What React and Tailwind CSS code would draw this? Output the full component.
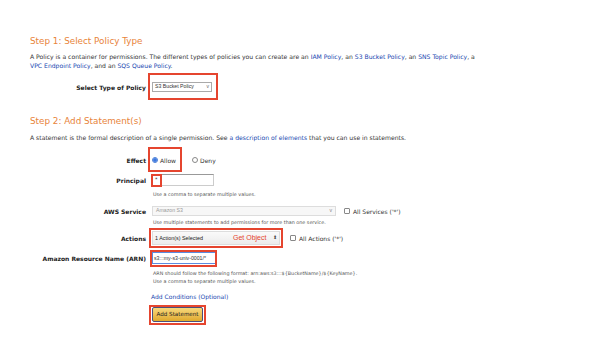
import React from 'react';

const font = { fontFamily: '"DejaVu Sans", Verdana, sans-serif' };

const Label = ({ children }) => (
    <div className="w-[116px] shrink-0 text-right font-bold text-[6px] text-[#222]">{children}</div>
);

const Check = ({ children }) => (
    <div className="flex items-center gap-[3px] text-[6px] text-[#333]">
        <span className="w-[6px] h-[6px] border border-[#888] bg-white rounded-[1px]" />
        {children}
    </div>
);

export default function App() {
    return (
        <div style={font} className="w-[614px] h-[340px] bg-white overflow-hidden pl-[30px] pt-[36px] text-[#333]">
            <h2 className="text-[8.8px] leading-[10px] text-[#e8843a]">Step 1: Select Policy Type</h2>
            <p className="mt-[6px] text-[6.1px] leading-[9px] text-[#333]">
                A Policy is a container for permissions. The different types of policies you can create are an{' '}
                <span className="text-[#2048b0]">IAM Policy</span>, an <span className="text-[#2048b0]">S3 Bucket Policy</span>, an{' '}
                <span className="text-[#2048b0]">SNS Topic Policy</span>, a<br />
                <span className="text-[#2048b0]">VPC Endpoint Policy</span>, and an <span className="text-[#2048b0]">SQS Queue Policy</span>.
            </p>

            {/* select type */}
            <div className="mt-[12px] flex items-center gap-[6px] h-[10px]">
                <Label>Select Type of Policy</Label>
                <div className="relative">
                    <div className="w-[60px] h-[10px] border border-[#aaa] bg-white flex items-center justify-between px-[2px] text-[5.2px] text-[#333]" style={{ fontFamily: '"Liberation Sans", Arial, sans-serif' }}>
                        <span>S3 Bucket Policy</span>
                        <span className="text-[5px] text-[#666]">v</span>
                    </div>
                    <div className="absolute left-[-4px] top-[-9px] w-[70px] h-[27px] border-2 border-[#e5452f]" />
                </div>
            </div>

            <h2 className="mt-[24px] text-[8.8px] leading-[10px] text-[#e8843a]">Step 2: Add Statement(s)</h2>
            <p className="mt-[6.5px] text-[6.1px] leading-[9px]">
                A statement is the formal description of a single permission. See{' '}
                <span className="text-[#2048b0]">a description of elements</span> that you can use in statements.
            </p>

            {/* effect */}
            <div className="mt-[13.5px] flex items-center gap-[6px] h-[10px]">
                <Label>Effect</Label>
                <div className="relative flex items-center text-[6px]">
                    <span className="w-[6px] h-[6px] rounded-full border border-[#4a7fd6] bg-white flex items-center justify-center">
                        <span className="w-[3.5px] h-[3.5px] rounded-full bg-[#3b78e0]" />
                    </span>
                    <span className="ml-[2px]">Allow</span>
                    <span className="ml-[16px] w-[6px] h-[6px] rounded-full border border-[#888] bg-white" />
                    <span className="ml-[2px]">Deny</span>
                    <div className="absolute left-[-4px] top-[-9px] w-[34px] h-[25px] border-2 border-[#e5452f]" />
                </div>
            </div>

            {/* principal */}
            <div className="mt-[9px] flex items-center gap-[6px] h-[12px]">
                <Label>Principal</Label>
                <div className="relative">
                    <div className="w-[62px] h-[12px] border border-[#ccc] border-t-[#999] bg-white text-[5px] pl-[2px] leading-[9px]">*</div>
                    <div className="absolute left-[-1px] top-0 w-[11px] h-[13px] border-2 border-[#e5452f]" />
                </div>
            </div>
            <div className="mt-[4px] ml-[122px] pl-[1px] text-[4.85px] leading-[8px] text-[#555]">Use a comma to separate multiple values.</div>

            {/* aws service */}
            <div className="mt-[8px] flex items-center gap-[6px] h-[10px]">
                <Label>AWS Service</Label>
                <div className="w-[184px] h-[10px] border border-[#ddd] bg-[#f7f7f7] flex items-center justify-between px-[3px] text-[5.2px] text-[#999]" style={{ fontFamily: '"Liberation Sans", Arial, sans-serif' }}>
                    <span>Amazon S3</span>
                    <span className="text-[#888]">v</span>
                </div>
                <div className="ml-[2px]"><Check>All Services ('*')</Check></div>
            </div>
            <div className="mt-[2px] ml-[122px] pl-[1px] text-[4.85px] leading-[8px] text-[#555]">Use multiple statements to add permissions for more than one service.</div>

            {/* actions */}
            <div className="mt-[5px] flex items-center gap-[6px] h-[14px]">
                <Label>Actions</Label>
                <div className="relative">
                    <div className="w-[128px] h-[14px] border border-[#ddd] bg-gradient-to-b from-[#fafafa] to-[#ececec] flex items-center px-[2px] text-[5.4px] text-[#222]" style={{ fontFamily: '"Liberation Sans", Arial, sans-serif' }}>
                        <span>1 Action(s) Selected</span>
                        <span className="ml-[30px] text-[7px] text-[#e5452f]">Get Object</span>
                        <span className="ml-auto text-[5px] text-[#444]">⬍</span>
                    </div>
                    <div className="absolute left-[-3px] top-[-3px] w-[134px] h-[20px] border-2 border-[#e5452f]" />
                </div>
                <div className="ml-[4px]"><Check>All Actions ('*')</Check></div>
            </div>

            {/* arn */}
            <div className="mt-[7px] flex items-center gap-[6px] h-[12px]">
                <Label>Amazon Resource Name (ARN)</Label>
                <div className="relative">
                    <div className="w-[64px] h-[12px] border border-[#5b8be0] bg-white text-[5.2px] leading-[10px] pl-[1px] text-[#333] overflow-hidden whitespace-nowrap" style={{ fontFamily: '"Liberation Sans", Arial, sans-serif' }}>
                        s3:::my-s3-univ-0001/*
                    </div>
                    <div className="absolute left-[-2px] top-[-2px] w-[67px] h-[17px] border-2 border-[#e5452f]" />
                </div>
            </div>
            <div className="mt-[5px] ml-[122px] pl-[1px] text-[4.85px] leading-[8px] text-[#555]">
                ARN should follow the following format: arn:aws:s3:::${'{'}BucketName{'}'}/${'{'}KeyName{'}'}.<br />
                Use a comma to separate multiple values.
            </div>

            <div className="mt-[6.5px] ml-[121px] text-[6px] leading-[9px] text-[#2048b0]">Add Conditions (Optional)</div>

            <div className="mt-[6.5px] ml-[122px] relative w-[51px] h-[15px]">
                <div className="w-[51px] h-[15px] rounded-[2px] border border-[#4a4f7a] bg-gradient-to-b from-[#f7d87a] to-[#e0aa2a] flex items-center justify-center text-[5.6px] text-[#222]">
                    Add Statement
                </div>
                <div className="absolute left-[-3px] top-[-2px] w-[57px] h-[20px] border-2 border-[#e5452f]" />
            </div>
        </div>
    );
}
